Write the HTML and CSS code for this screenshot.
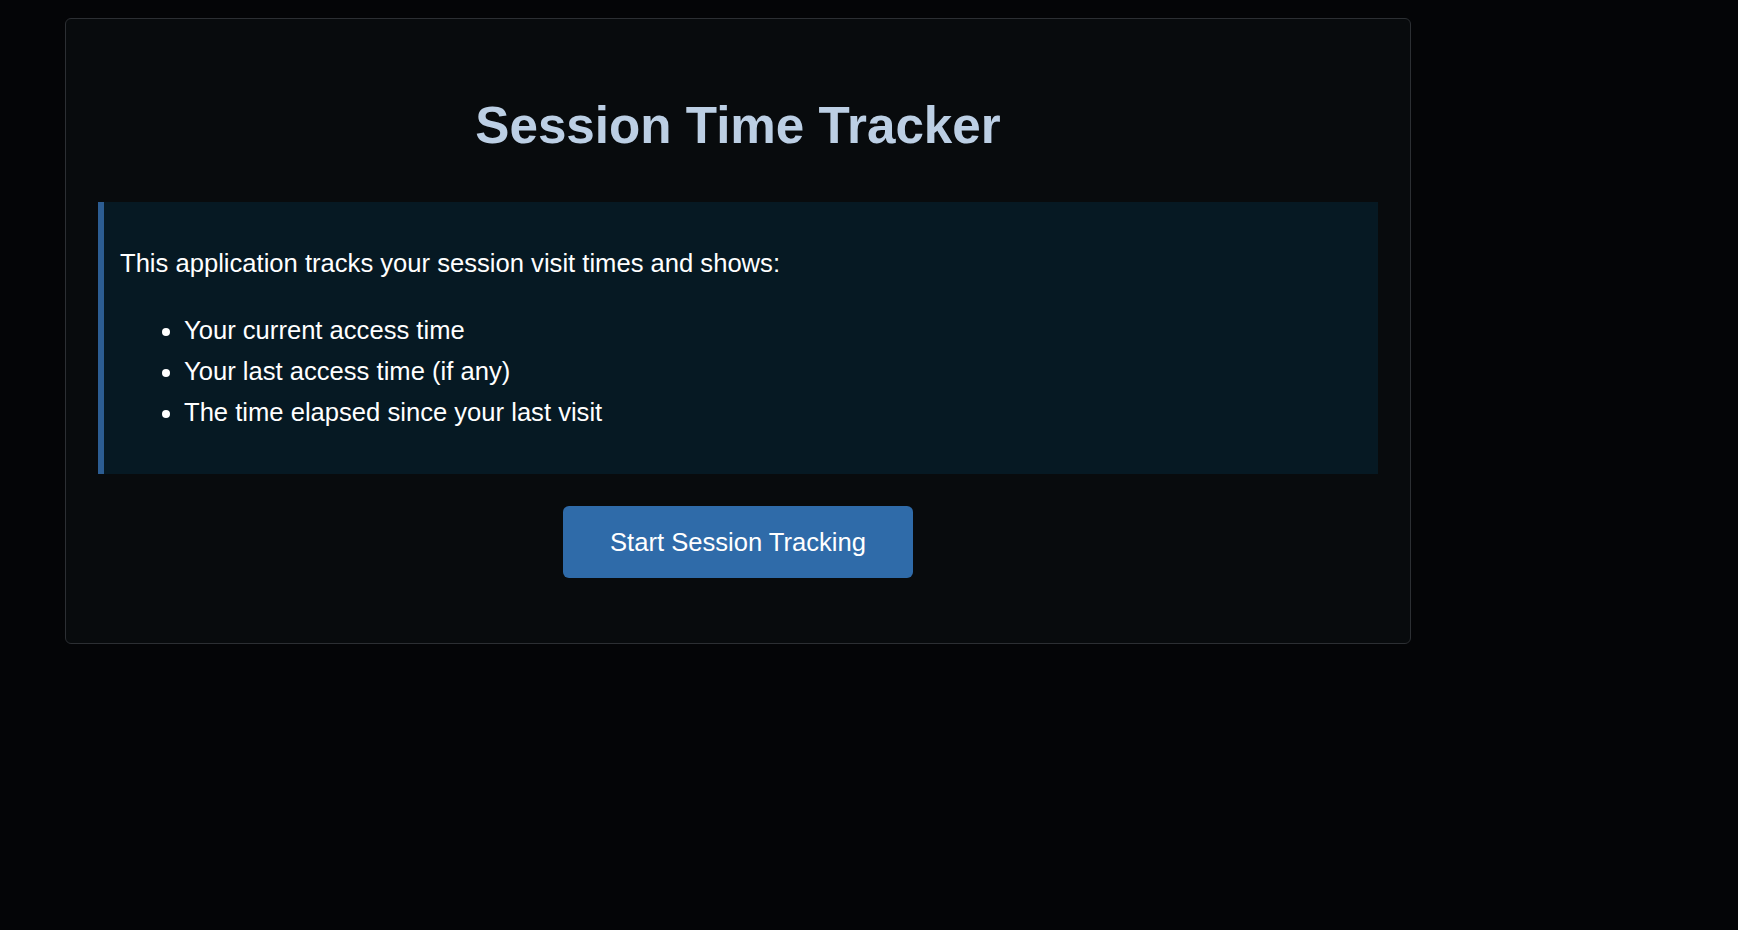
FILE: index.html
```html
<!DOCTYPE html>
<html lang="en">
<head>
<meta charset="utf-8">
<title>Session Time Tracker</title>
<link rel="stylesheet" href="styles.css">
</head>
<body>
  <div class="card">
    <h1 class="title">Session Time Tracker</h1>
    <div class="info">
      <p class="info-text">This application tracks your session visit times and shows:</p>
      <ul class="info-list">
        <li>Your current access time</li>
        <li>Your last access time (if any)</li>
        <li>The time elapsed since your last visit</li>
      </ul>
    </div>
    <div class="actions">
      <button class="btn" type="button">Start Session Tracking</button>
    </div>
  </div>
</body>
</html>
```

FILE: styles.css
```css
html, body {
  margin: 0;
  padding: 0;
  background: #040507;
}
body {
  font-family: "Liberation Sans", Arial, Helvetica, sans-serif;
  font-size: 25.6px;
  line-height: 41px;
  color: #ffffff;
  padding: 18px 0 0 65px;
}
.card {
  width: 1280px;
  padding: 32px;
  background: #080b0d;
  border: 1px solid #2c2f33;
  border-radius: 6px;
}
.title {
  margin: 45px 0 47px;
  font-size: 51.2px;
  line-height: 59px;
  font-weight: bold;
  text-align: center;
  color: #bccfe4;
}
.info {
  background: #061923;
  border-left: 6px solid #2c5d92;
  padding: 41px 24px 41px 16px;
}
.info-text {
  margin: 0;
}
.info-list {
  margin: 26px 0 0;
  padding-left: 64px;
}
.info-list li {
  line-height: 41px;
}
.actions {
  display: flex;
  justify-content: center;
  margin-top: 32px;
  margin-bottom: 33px;
}
.btn {
  font-family: "Liberation Sans", Arial, Helvetica, sans-serif;
  font-size: 25.6px;
  line-height: 29px;
  color: #ffffff;
  background: #2f6ba9;
  border: none;
  border-radius: 6px;
  padding: 22px 47px 21px;
  cursor: pointer;
}
```
